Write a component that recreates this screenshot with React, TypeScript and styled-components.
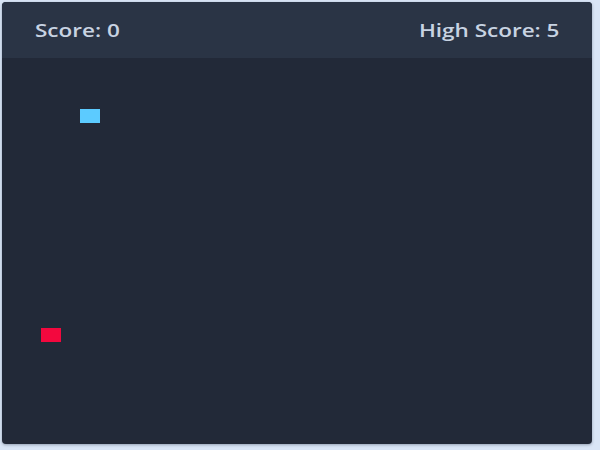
import React from "react";
import styled, { createGlobalStyle } from "styled-components";

const Global = createGlobalStyle`
  html, body { margin: 0; padding: 0; }
  body {
    background: #d9e5f6;
    font-family: "Open Sans", "Liberation Sans", sans-serif;
  }
`;

const Page = styled.div`
  width: 600px;
  height: 450px;
  padding: 2px 8px 6px 2px;
  box-sizing: border-box;
  display: flex;
`;

const Board = styled.div`
  flex: 1;
  display: flex;
  flex-direction: column;
  background: #222938;
  border-radius: 4px;
  overflow: hidden;
  box-shadow: 0 1px 3px rgba(20, 30, 50, 0.35);
`;

const Header = styled.div`
  height: 56px;
  flex: none;
  display: flex;
  align-items: center;
  justify-content: space-between;
  padding: 0 33px 0 33px;
  background: #2a3445;
  color: #c8d3e2;
  font-size: 18px;
  font-weight: 600;
`;

const ScoreText = styled.span<{ $align: "left" | "right" }>`
  display: inline-block;
  transform: scaleX(1.25);
  transform-origin: ${(p) => p.$align} center;
`;

const Canvas = styled.div`
  position: relative;
  flex: 1;
`;

const Cell = styled.div<{ $color: string }>`
  position: absolute;
  width: 20px;
  height: 14px;
  background: ${(p) => p.$color};
`;

export default function App() {
  const snake = [{ x: 78, y: 51 }];
  const food = { x: 39, y: 270 };
  return (
    <>
      <Global />
      <Page>
        <Board>
          <Header>
            <ScoreText $align="left">Score: 0</ScoreText>
            <ScoreText $align="right">High Score: 5</ScoreText>
          </Header>
          <Canvas>
            {snake.map((s, i) => (
              <Cell key={i} $color="#5ccbff" style={{ left: s.x, top: s.y }} />
            ))}
            <Cell $color="#f3083e" style={{ left: food.x, top: food.y }} />
          </Canvas>
        </Board>
      </Page>
    </>
  );
}
